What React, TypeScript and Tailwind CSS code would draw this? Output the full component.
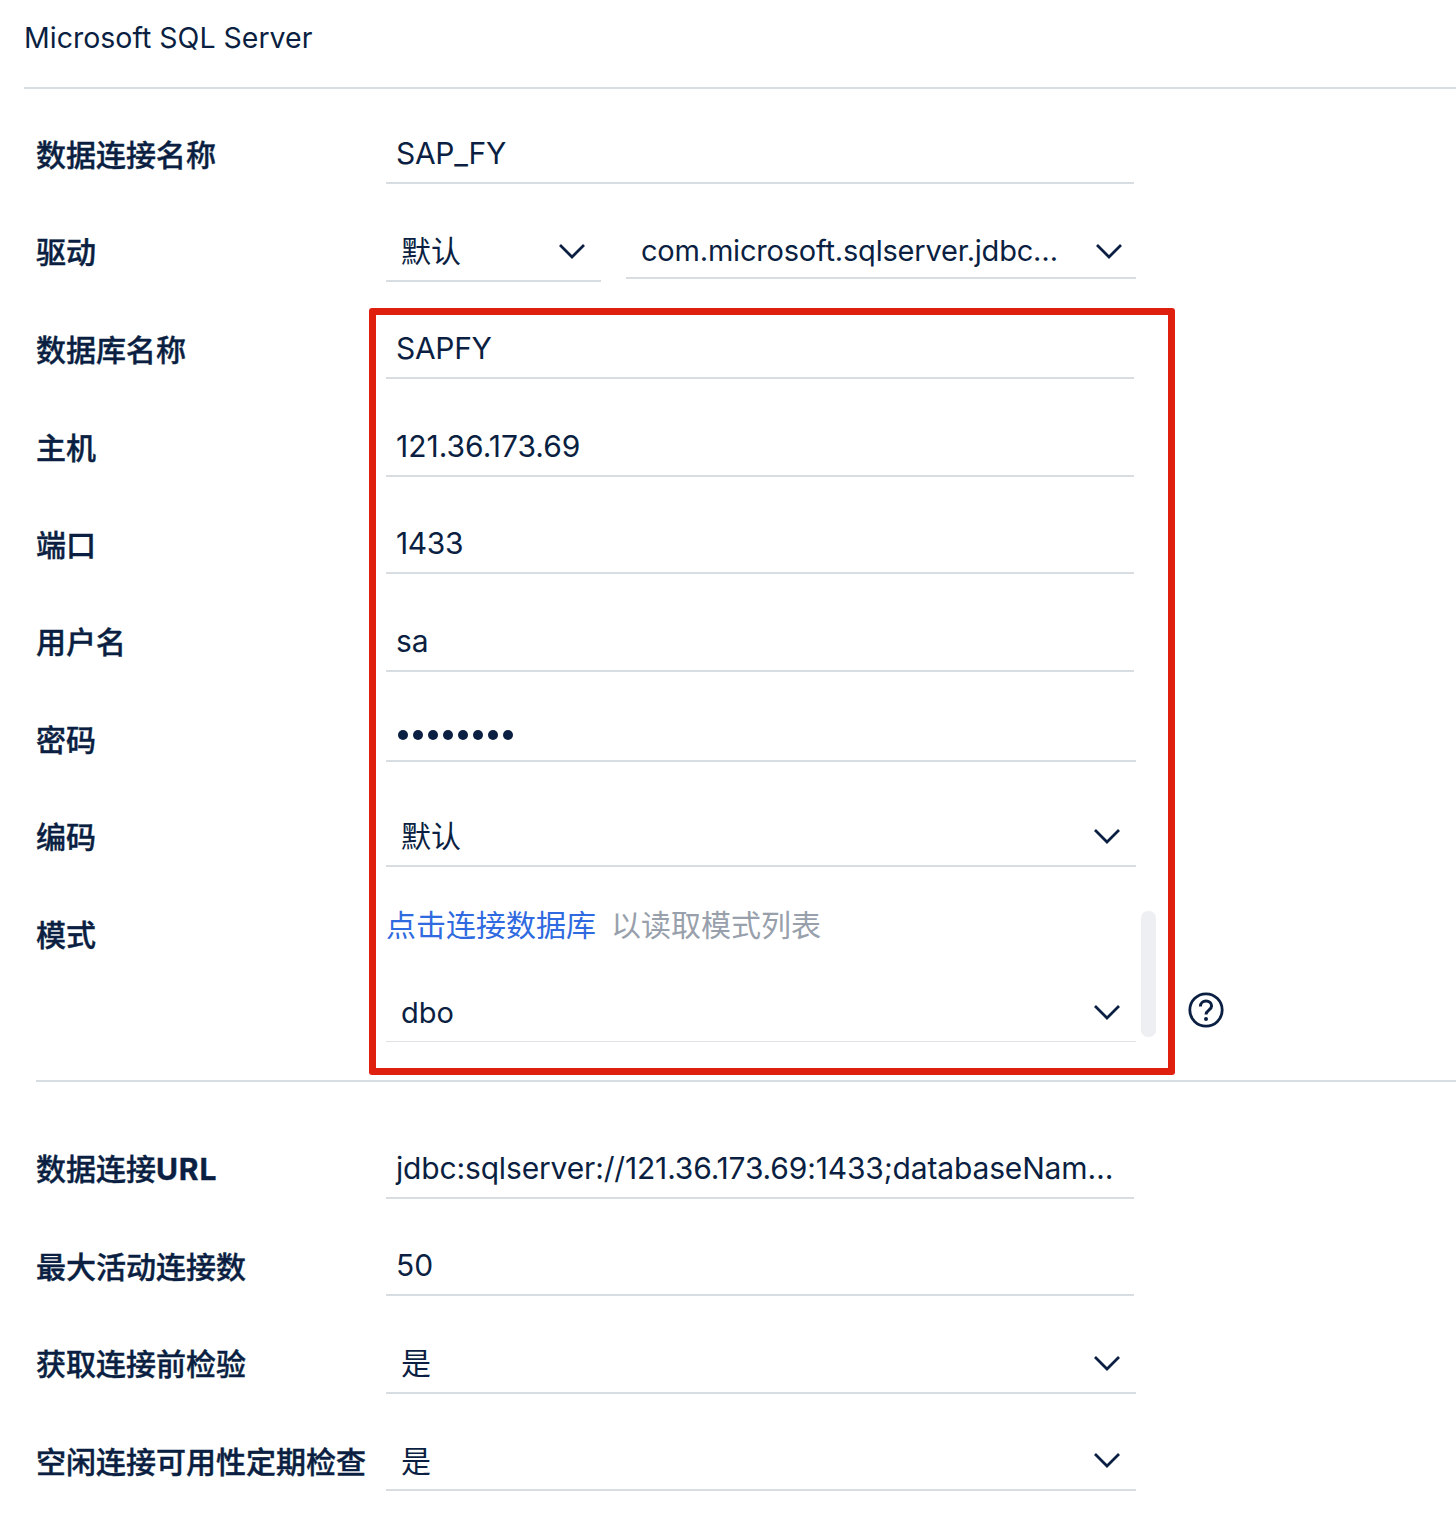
import React from "react";

const Chevron = () => (
  <svg width="28" height="18" viewBox="0 0 28 18" fill="none">
    <path d="M2 3 L14 15 L26 3" stroke="#0b1f42" strokeWidth="2.8" />
  </svg>
);

const Label = ({ children, text = "leading-[61px]" }: { children: React.ReactNode; text?: string }) => (
  <div className={`w-[386px] h-[60px] shrink-0 pl-[36px] text-[30px] font-medium [-webkit-text-stroke:0.4px_#0b1f42] whitespace-nowrap text-[#0b1f42] ${text}`}>{children}</div>
);

const Input = ({ value, text = "" }: { value: string; text?: string }) => (
  <div className={`w-[748px] h-[60px] border-b-2 border-[#d8dde2] pl-[10px] text-[30px] leading-[58px] whitespace-nowrap text-[#0b1f42] ${text}`}>{value}</div>
);

const Select = ({ value, box = "w-[750px] h-[60px] pr-[15px]", text = "", line = "border-b-2 border-[#d8dde2]" }: { value: string; box?: string; text?: string; line?: string }) => (
  <div className={`${box} ${line} pl-[15px] flex items-center justify-between text-[30px] text-[#0b1f42]`}>
    <span className={`whitespace-nowrap ${text}`}>{value}</span>
    <Chevron />
  </div>
);

export default function App() {
  return (
    <div className="relative w-[1456px] h-[1524px] bg-white overflow-hidden font-['Inter','Noto_Sans_CJK_SC',sans-serif]">
      <div className="ml-[24px] h-[89px] border-b-2 border-[#d8dde2] pt-[14px] text-[28.5px] leading-[48px] text-[#0b1f42]">Microsoft SQL Server</div>

      <div className="flex mt-[35px]"><Label text="leading-[63px]">数据连接名称</Label><Input value="SAP_FY" text="tracking-[-0.3px]" /></div>

      <div className="flex items-start mt-[36px]">
        <Label text="leading-[65px]">驱动</Label>
        <div className="flex items-start gap-[25px]">
          <Select value="默认" box="w-[215px] h-[62px] pt-[2px] pr-[15px]" />
          <Select value="com.microsoft.sqlserver.jdbc…" box="w-[510px] h-[59px] pt-[4px] pr-[13px]" text="text-[29px] tracking-[-0.2px]" />
        </div>
      </div>

      <div className="flex mt-[37px]"><Label text="leading-[63px]">数据库名称</Label><Input value="SAPFY" text="tracking-[-0.3px]" /></div>
      <div className="flex mt-[38px]"><Label text="leading-[63px]">主机</Label><Input value="121.36.173.69" /></div>
      <div className="flex mt-[37px]"><Label text="leading-[63px]">端口</Label><Input value="1433" text="tracking-[-0.4px]" /></div>
      <div className="flex mt-[38px]"><Label>用户名</Label><Input value="sa" /></div>
      <div className="flex mt-[30px]">
        <Label text="leading-[63px] pt-[7px]">密码</Label>
        <div className="w-[750px] h-[60px] border-b-2 border-[#d8dde2] pl-[12px] pt-[28px] flex gap-[5px]">
          {[0, 1, 2, 3, 4, 5, 6, 7].map((i) => (
            <span key={i} className="w-[10px] h-[10px] rounded-full bg-[#0b1f42]" />
          ))}
        </div>
      </div>
      <div className="flex mt-[45px]"><Label>编码</Label><Select value="默认" /></div>

      <div className="flex mt-[38px]">
        <Label>模式</Label>
        <div className="w-[750px]">
          <div className="h-[40px] leading-[40px] text-[30px] whitespace-nowrap">
            <span className="text-[#2f6ae0]">点击连接数据库</span>
            <span className="ml-[15px] text-[#98a0ac]">以读取模式列表</span>
          </div>
          <div className="mt-[37px]"><Select value="dbo" text="text-[29px] pt-[2px]" line="border-b border-[#dfe1e4]" /></div>
        </div>
        <div className="ml-[5px] w-[15px] h-[126px] rounded-[7px] bg-[#eeeff2] mt-[6px]" />
        <div className="ml-[32px] mt-[87px]">
          <svg width="36" height="36" viewBox="0 0 36 36" fill="none">
            <circle cx="18" cy="18" r="16.2" stroke="#0b1f42" strokeWidth="2.8" />
            <path d="M12.4 14.4c0-3.2 2.5-5.4 5.6-5.4s5.6 2.2 5.6 5c0 4-5.6 4.2-5.6 8.4" stroke="#0b1f42" strokeWidth="3" />
            <circle cx="18" cy="27" r="2" fill="#0b1f42" />
          </svg>
        </div>
      </div>

      <div className="ml-[36px] mt-[38px] h-[2px] bg-[#d8dde2]" />

      <div className="flex mt-[57px]"><Label>数据连接<span className="font-bold tracking-[0.9px]">URL</span></Label><Input value="jdbc:sqlserver://121.36.173.69:1433;databaseNam…" text="tracking-[-0.16px]" /></div>
      <div className="flex mt-[37px]"><Label text="leading-[63px]">最大活动连接数</Label><Input value="50" /></div>
      <div className="flex mt-[38px]"><Label>获取连接前检验</Label><Select value="是" /></div>
      <div className="flex mt-[37px]"><Label text="leading-[63px]">空闲连接可用性定期检查</Label><Select value="是" text="pt-[2px]" /></div>

      <div className="absolute left-[369px] top-[308px] w-[806px] h-[767px] border-[7px] border-[#e0200f] rounded-[3px]" />
    </div>
  );
}
